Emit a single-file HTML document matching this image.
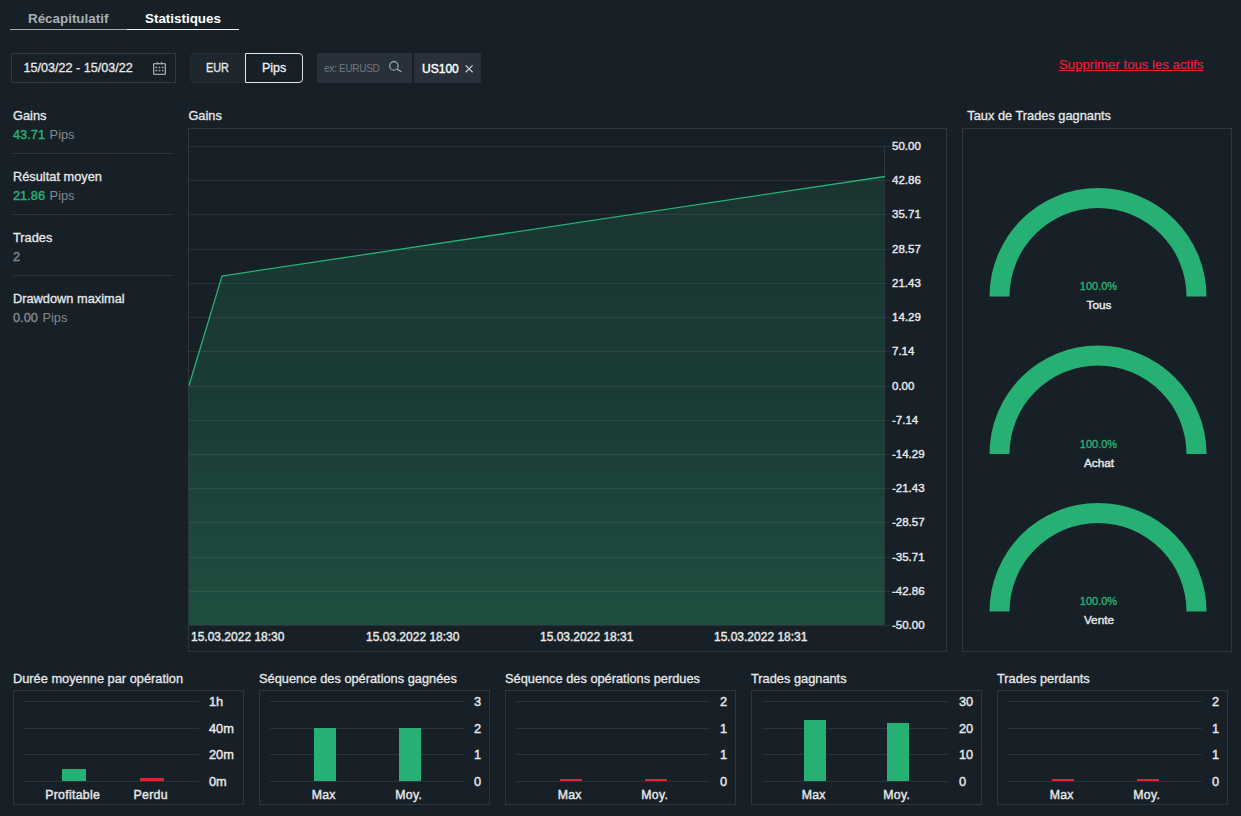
<!DOCTYPE html>
<html><head><meta charset="utf-8">
<style>
*{box-sizing:border-box;margin:0;padding:0}
html,body{width:1241px;height:816px;overflow:hidden;background:#182027;font-family:"Liberation Sans", sans-serif;color:#e6e8ea}
.abs{position:absolute}
.t{position:absolute;white-space:nowrap;line-height:1}
.m{-webkit-text-stroke:0.25px currentColor}
svg text{font-family:"Liberation Sans", sans-serif}
</style></head><body>
<div class="t" style="left:28px;top:11.76px;font-size:13.4px;font-weight:bold;color:#a9afb4;">Récapitulatif</div>
<div class="t" style="left:145px;top:11.76px;font-size:13.4px;font-weight:bold;color:#ffffff;">Statistiques</div>
<div class="abs" style="left:10px;top:29px;width:117px;height:1px;background:#a3abb0"></div>
<div class="abs" style="left:127px;top:29px;width:112px;height:1px;background:#f4f4f4"></div>
<div class="abs" style="left:11px;top:53px;width:165px;height:30px;border:1px solid #2f3a41"></div>
<div class="t" style="left:23.6px;top:62.43px;font-size:12.6px;font-weight:normal;color:#e8e9ea;-webkit-text-stroke:0.3px currentColor">15/03/22 - 15/03/22</div>
<svg class="abs" style="left:150px;top:59px" width="20" height="20" viewBox="150 59 20 20">
<rect x="153.65" y="63.65" width="11.7" height="10.7" rx="0.6" fill="none" stroke="#9aa9b4" stroke-width="1.3"/>
<line x1="157.5" y1="61.8" x2="157.5" y2="64.5" stroke="#9aa7b0" stroke-width="1.1"/>
<line x1="161.5" y1="61.8" x2="161.5" y2="64.5" stroke="#9aa7b0" stroke-width="1.1"/>
<g fill="#9aa7b0"><circle cx="156.3" cy="67.4" r="0.95"/><circle cx="159.5" cy="67.4" r="0.95"/><circle cx="162.7" cy="67.4" r="0.95"/><circle cx="156.3" cy="70.6" r="0.95"/><circle cx="159.5" cy="70.6" r="0.95"/><circle cx="162.7" cy="70.6" r="0.95"/></g>
</svg>
<div class="abs" style="left:190px;top:53px;width:113px;height:30px;background:#1f272e;border:1px solid #252e35;border-radius:4px"></div>
<div class="t" style="left:206.2px;top:62.09px;font-size:12.3px;font-weight:normal;color:#e8e9ea;-webkit-text-stroke:0.3px currentColor;transform:scaleX(0.885);transform-origin:0 0">EUR</div>
<div class="abs" style="left:245px;top:53px;width:58px;height:30px;border:1.5px solid #e4e4e4;border-radius:0 4px 4px 0;background:#182027"></div>
<div class="t" style="left:262px;top:62.12px;font-size:12.5px;font-weight:normal;color:#f0f0f0;-webkit-text-stroke:0.3px currentColor">Pips</div>
<div class="abs" style="left:317px;top:53px;width:95px;height:30px;background:#283139"></div>
<div class="t" style="left:324.1px;top:64.03px;font-size:10px;font-weight:normal;color:#6f7880;letter-spacing:-0.3px">ex: EURUSD</div>
<svg class="abs" style="left:385px;top:58px" width="20" height="18" viewBox="385 58 20 18">
<circle cx="393.9" cy="65.9" r="4.2" fill="none" stroke="#9aadb8" stroke-width="1.2"/>
<line x1="396.9" y1="69" x2="401.5" y2="71.8" stroke="#9aadb8" stroke-width="1.3"/>
</svg>
<div class="abs" style="left:414px;top:53px;width:67px;height:30px;background:#283139"></div>
<div class="t" style="left:422.1px;top:62.94px;font-size:12px;font-weight:normal;color:#ffffff;-webkit-text-stroke:0.4px #fff">US100</div>
<svg class="abs" style="left:463px;top:63px" width="12" height="12" viewBox="463 63 12 12">
<path d="M465.6 65.4L472.6 72.2M472.6 65.4L465.6 72.2" stroke="#c9ced1" stroke-width="1.2"/>
</svg>
<div class="t" style="left:1059px;top:57.83px;font-size:13.2px;font-weight:normal;color:#ea1f28;text-decoration:underline;text-underline-offset:1px;-webkit-text-stroke:0.2px #ea1f28">Supprimer tous les actifs</div>
<div class="t" style="left:13px;top:110.36px;font-size:12.8px;font-weight:normal;color:#e6e8ea;-webkit-text-stroke:0.3px currentColor">Gains</div>
<div class="t" style="left:13px;top:129.46px;font-size:12.8px"><span style="color:#27b074;-webkit-text-stroke:0.4px #27b074">43.71</span> <span style="color:#80888e;margin-left:1px">Pips</span></div>
<div class="abs" style="left:13px;top:153px;width:160px;height:1px;background:#2c373e"></div>
<div class="t" style="left:13px;top:171.36px;font-size:12.8px;font-weight:normal;color:#e6e8ea;-webkit-text-stroke:0.3px currentColor">Résultat moyen</div>
<div class="t" style="left:13px;top:190.46px;font-size:12.8px"><span style="color:#27b074;-webkit-text-stroke:0.4px #27b074">21.86</span> <span style="color:#80888e;margin-left:1px">Pips</span></div>
<div class="abs" style="left:13px;top:214px;width:160px;height:1px;background:#2c373e"></div>
<div class="t" style="left:13px;top:232.36px;font-size:12.8px;font-weight:normal;color:#e6e8ea;-webkit-text-stroke:0.3px currentColor">Trades</div>
<div class="t" style="left:13px;top:251.46px;font-size:12.8px;font-weight:normal;color:#80888e;"><span style="-webkit-text-stroke:0.4px #80888e">2</span></div>
<div class="abs" style="left:13px;top:275px;width:160px;height:1px;background:#2c373e"></div>
<div class="t" style="left:13px;top:293.36px;font-size:12.8px;font-weight:normal;color:#e6e8ea;-webkit-text-stroke:0.3px currentColor">Drawdown maximal</div>
<div class="t" style="left:13px;top:312.46px;font-size:12.8px"><span style="color:#80888e;-webkit-text-stroke:0.4px #80888e">0.00</span> <span style="color:#80888e;margin-left:1px">Pips</span></div>
<div class="t" style="left:188.4px;top:110.36px;font-size:12.8px;font-weight:normal;color:#e6e8ea;-webkit-text-stroke:0.3px currentColor">Gains</div>
<div class="t" style="left:967.3px;top:110.36px;font-size:12.8px;font-weight:normal;color:#e6e8ea;-webkit-text-stroke:0.3px currentColor">Taux de Trades gagnants</div>
<svg class="abs" style="left:0;top:0" width="1241" height="816" viewBox="0 0 1241 816">
<defs><linearGradient id="fg" x1="0" y1="176" x2="0" y2="625" gradientUnits="userSpaceOnUse"><stop offset="0" stop-color="#27b074" stop-opacity="0.14"/><stop offset="0.55" stop-color="#27b074" stop-opacity="0.2"/><stop offset="1" stop-color="#27b074" stop-opacity="0.33"/></linearGradient></defs>
<rect x="188.5" y="128.5" width="758" height="523" fill="none" stroke="#2c373e"/>
<path d="M189 385.5 L222 276 L885 176.5 L885 625 L189 625 Z" fill="url(#fg)"/>
<line x1="189" y1="146.5" x2="890" y2="146.5" stroke="#ffffff" stroke-opacity="0.075"/>
<text x="892" y="150.0" font-size="11.5" fill="#e6e8ea" stroke="#e6e8ea" stroke-width="0.4">50.00</text>
<line x1="189" y1="180.5" x2="890" y2="180.5" stroke="#ffffff" stroke-opacity="0.075"/>
<text x="892" y="184.0" font-size="11.5" fill="#e6e8ea" stroke="#e6e8ea" stroke-width="0.4">42.86</text>
<line x1="189" y1="214.5" x2="890" y2="214.5" stroke="#ffffff" stroke-opacity="0.075"/>
<text x="892" y="218.0" font-size="11.5" fill="#e6e8ea" stroke="#e6e8ea" stroke-width="0.4">35.71</text>
<line x1="189" y1="249.5" x2="890" y2="249.5" stroke="#ffffff" stroke-opacity="0.075"/>
<text x="892" y="253.0" font-size="11.5" fill="#e6e8ea" stroke="#e6e8ea" stroke-width="0.4">28.57</text>
<line x1="189" y1="283.5" x2="890" y2="283.5" stroke="#ffffff" stroke-opacity="0.075"/>
<text x="892" y="287.0" font-size="11.5" fill="#e6e8ea" stroke="#e6e8ea" stroke-width="0.4">21.43</text>
<line x1="189" y1="317.5" x2="890" y2="317.5" stroke="#ffffff" stroke-opacity="0.075"/>
<text x="892" y="321.0" font-size="11.5" fill="#e6e8ea" stroke="#e6e8ea" stroke-width="0.4">14.29</text>
<line x1="189" y1="351.5" x2="890" y2="351.5" stroke="#ffffff" stroke-opacity="0.075"/>
<text x="892" y="355.0" font-size="11.5" fill="#e6e8ea" stroke="#e6e8ea" stroke-width="0.4">7.14</text>
<line x1="189" y1="386.5" x2="890" y2="386.5" stroke="#ffffff" stroke-opacity="0.075"/>
<text x="892" y="390.0" font-size="11.5" fill="#e6e8ea" stroke="#e6e8ea" stroke-width="0.4">0.00</text>
<line x1="189" y1="420.5" x2="890" y2="420.5" stroke="#ffffff" stroke-opacity="0.075"/>
<text x="892" y="424.0" font-size="11.5" fill="#e6e8ea" stroke="#e6e8ea" stroke-width="0.4">-7.14</text>
<line x1="189" y1="454.5" x2="890" y2="454.5" stroke="#ffffff" stroke-opacity="0.075"/>
<text x="892" y="458.0" font-size="11.5" fill="#e6e8ea" stroke="#e6e8ea" stroke-width="0.4">-14.29</text>
<line x1="189" y1="488.5" x2="890" y2="488.5" stroke="#ffffff" stroke-opacity="0.075"/>
<text x="892" y="492.0" font-size="11.5" fill="#e6e8ea" stroke="#e6e8ea" stroke-width="0.4">-21.43</text>
<line x1="189" y1="522.5" x2="890" y2="522.5" stroke="#ffffff" stroke-opacity="0.075"/>
<text x="892" y="526.0" font-size="11.5" fill="#e6e8ea" stroke="#e6e8ea" stroke-width="0.4">-28.57</text>
<line x1="189" y1="557.5" x2="890" y2="557.5" stroke="#ffffff" stroke-opacity="0.075"/>
<text x="892" y="561.0" font-size="11.5" fill="#e6e8ea" stroke="#e6e8ea" stroke-width="0.4">-35.71</text>
<line x1="189" y1="591.5" x2="890" y2="591.5" stroke="#ffffff" stroke-opacity="0.075"/>
<text x="892" y="595.0" font-size="11.5" fill="#e6e8ea" stroke="#e6e8ea" stroke-width="0.4">-42.86</text>
<line x1="189" y1="625.5" x2="890" y2="625.5" stroke="#ffffff" stroke-opacity="0.075"/>
<text x="892" y="629.0" font-size="11.5" fill="#e6e8ea" stroke="#e6e8ea" stroke-width="0.4">-50.00</text>
<line x1="884.5" y1="146" x2="884.5" y2="625" stroke="#2c373e"/>
<polyline points="189,385.5 222,276 885,176.5" fill="none" stroke="#27b074" stroke-width="1.3"/>
<text x="191" y="641" font-size="12" fill="#e6e8ea" stroke="#e6e8ea" stroke-width="0.4">15.03.2022 18:30</text>
<text x="366" y="641" font-size="12" fill="#e6e8ea" stroke="#e6e8ea" stroke-width="0.4">15.03.2022 18:30</text>
<text x="540" y="641" font-size="12" fill="#e6e8ea" stroke="#e6e8ea" stroke-width="0.4">15.03.2022 18:31</text>
<text x="714" y="641" font-size="12" fill="#e6e8ea" stroke="#e6e8ea" stroke-width="0.4">15.03.2022 18:31</text>
<rect x="962.5" y="128.5" width="269" height="523" fill="none" stroke="#2c373e"/>
<path d="M989.5 296.5 A108.5 108.5 0 0 1 1206.5 296.5 L1186.5 296.5 A88.5 88.5 0 0 0 1009.5 296.5 Z" fill="#27b074"/>
<text x="1098.5" y="290.4" text-anchor="middle" font-size="11" fill="#27b074" stroke="#27b074" stroke-width="0.35">100.0%</text>
<text x="1099" y="309.2" text-anchor="middle" font-size="11.8" fill="#e6e8ea" stroke="#e6e8ea" stroke-width="0.4">Tous</text>
<path d="M989.5 454 A108.5 108.5 0 0 1 1206.5 454 L1186.5 454 A88.5 88.5 0 0 0 1009.5 454 Z" fill="#27b074"/>
<text x="1098.5" y="447.9" text-anchor="middle" font-size="11" fill="#27b074" stroke="#27b074" stroke-width="0.35">100.0%</text>
<text x="1099" y="466.7" text-anchor="middle" font-size="11.8" fill="#e6e8ea" stroke="#e6e8ea" stroke-width="0.4">Achat</text>
<path d="M989.5 611.5 A108.5 108.5 0 0 1 1206.5 611.5 L1186.5 611.5 A88.5 88.5 0 0 0 1009.5 611.5 Z" fill="#27b074"/>
<text x="1098.5" y="605.4" text-anchor="middle" font-size="11" fill="#27b074" stroke="#27b074" stroke-width="0.35">100.0%</text>
<text x="1099" y="624.2" text-anchor="middle" font-size="11.8" fill="#e6e8ea" stroke="#e6e8ea" stroke-width="0.4">Vente</text>
<rect x="13.5" y="690.5" width="230" height="114" fill="none" stroke="#2c373e"/>
<line x1="24" y1="701.5" x2="199" y2="701.5" stroke="#29343b"/>
<text x="209" y="705.8" font-size="12.8" fill="#e6e8ea" stroke="#e6e8ea" stroke-width="0.4">1h</text>
<line x1="24" y1="728.5" x2="199" y2="728.5" stroke="#29343b"/>
<text x="209" y="732.8" font-size="12.8" fill="#e6e8ea" stroke="#e6e8ea" stroke-width="0.4">40m</text>
<line x1="24" y1="754.5" x2="199" y2="754.5" stroke="#29343b"/>
<text x="209" y="758.8" font-size="12.8" fill="#e6e8ea" stroke="#e6e8ea" stroke-width="0.4">20m</text>
<line x1="24" y1="781.5" x2="199" y2="781.5" stroke="#29343b"/>
<text x="209" y="785.8" font-size="12.8" fill="#e6e8ea" stroke="#e6e8ea" stroke-width="0.4">0m</text>
<rect x="62" y="769" width="24" height="12" fill="#27b074"/>
<rect x="140" y="778" width="24" height="3" fill="#e0232e"/>
<text x="72.7" y="798.7" text-anchor="middle" font-size="12.3" letter-spacing="0.3" fill="#e6e8ea" stroke="#e6e8ea" stroke-width="0.4">Profitable</text>
<text x="150.7" y="798.7" text-anchor="middle" font-size="12.3" letter-spacing="0.3" fill="#e6e8ea" stroke="#e6e8ea" stroke-width="0.4">Perdu</text>
<rect x="259.5" y="690.5" width="230" height="114" fill="none" stroke="#2c373e"/>
<line x1="270" y1="701.5" x2="464" y2="701.5" stroke="#29343b"/>
<text x="474" y="705.8" font-size="12.8" fill="#e6e8ea" stroke="#e6e8ea" stroke-width="0.4">3</text>
<line x1="270" y1="728.5" x2="464" y2="728.5" stroke="#29343b"/>
<text x="474" y="732.8" font-size="12.8" fill="#e6e8ea" stroke="#e6e8ea" stroke-width="0.4">2</text>
<line x1="270" y1="754.5" x2="464" y2="754.5" stroke="#29343b"/>
<text x="474" y="758.8" font-size="12.8" fill="#e6e8ea" stroke="#e6e8ea" stroke-width="0.4">1</text>
<line x1="270" y1="781.5" x2="464" y2="781.5" stroke="#29343b"/>
<text x="474" y="785.8" font-size="12.8" fill="#e6e8ea" stroke="#e6e8ea" stroke-width="0.4">0</text>
<rect x="314" y="728" width="22" height="53" fill="#27b074"/>
<rect x="399" y="728" width="22" height="53" fill="#27b074"/>
<text x="323.7" y="798.7" text-anchor="middle" font-size="12.3" letter-spacing="0.3" fill="#e6e8ea" stroke="#e6e8ea" stroke-width="0.4">Max</text>
<text x="408.7" y="798.7" text-anchor="middle" font-size="12.3" letter-spacing="0.3" fill="#e6e8ea" stroke="#e6e8ea" stroke-width="0.4">Moy.</text>
<rect x="505.5" y="690.5" width="230" height="114" fill="none" stroke="#2c373e"/>
<line x1="516" y1="701.5" x2="710" y2="701.5" stroke="#29343b"/>
<text x="720" y="705.8" font-size="12.8" fill="#e6e8ea" stroke="#e6e8ea" stroke-width="0.4">2</text>
<line x1="516" y1="728.5" x2="710" y2="728.5" stroke="#29343b"/>
<text x="720" y="732.8" font-size="12.8" fill="#e6e8ea" stroke="#e6e8ea" stroke-width="0.4">1</text>
<line x1="516" y1="754.5" x2="710" y2="754.5" stroke="#29343b"/>
<text x="720" y="758.8" font-size="12.8" fill="#e6e8ea" stroke="#e6e8ea" stroke-width="0.4">1</text>
<line x1="516" y1="781.5" x2="710" y2="781.5" stroke="#29343b"/>
<text x="720" y="785.8" font-size="12.8" fill="#e6e8ea" stroke="#e6e8ea" stroke-width="0.4">0</text>
<rect x="560" y="779" width="22" height="2" fill="#e0232e"/>
<rect x="645" y="779" width="22" height="2" fill="#e0232e"/>
<text x="569.7" y="798.7" text-anchor="middle" font-size="12.3" letter-spacing="0.3" fill="#e6e8ea" stroke="#e6e8ea" stroke-width="0.4">Max</text>
<text x="654.7" y="798.7" text-anchor="middle" font-size="12.3" letter-spacing="0.3" fill="#e6e8ea" stroke="#e6e8ea" stroke-width="0.4">Moy.</text>
<rect x="751.5" y="690.5" width="230" height="114" fill="none" stroke="#2c373e"/>
<line x1="762" y1="701.5" x2="949" y2="701.5" stroke="#29343b"/>
<text x="959" y="705.8" font-size="12.8" fill="#e6e8ea" stroke="#e6e8ea" stroke-width="0.4">30</text>
<line x1="762" y1="728.5" x2="949" y2="728.5" stroke="#29343b"/>
<text x="959" y="732.8" font-size="12.8" fill="#e6e8ea" stroke="#e6e8ea" stroke-width="0.4">20</text>
<line x1="762" y1="754.5" x2="949" y2="754.5" stroke="#29343b"/>
<text x="959" y="758.8" font-size="12.8" fill="#e6e8ea" stroke="#e6e8ea" stroke-width="0.4">10</text>
<line x1="762" y1="781.5" x2="949" y2="781.5" stroke="#29343b"/>
<text x="959" y="785.8" font-size="12.8" fill="#e6e8ea" stroke="#e6e8ea" stroke-width="0.4">0</text>
<rect x="804" y="720" width="22" height="61" fill="#27b074"/>
<rect x="887" y="723" width="22" height="58" fill="#27b074"/>
<text x="813.7" y="798.7" text-anchor="middle" font-size="12.3" letter-spacing="0.3" fill="#e6e8ea" stroke="#e6e8ea" stroke-width="0.4">Max</text>
<text x="896.7" y="798.7" text-anchor="middle" font-size="12.3" letter-spacing="0.3" fill="#e6e8ea" stroke="#e6e8ea" stroke-width="0.4">Moy.</text>
<rect x="997.5" y="690.5" width="230" height="114" fill="none" stroke="#2c373e"/>
<line x1="1008" y1="701.5" x2="1202" y2="701.5" stroke="#29343b"/>
<text x="1212" y="705.8" font-size="12.8" fill="#e6e8ea" stroke="#e6e8ea" stroke-width="0.4">2</text>
<line x1="1008" y1="728.5" x2="1202" y2="728.5" stroke="#29343b"/>
<text x="1212" y="732.8" font-size="12.8" fill="#e6e8ea" stroke="#e6e8ea" stroke-width="0.4">1</text>
<line x1="1008" y1="754.5" x2="1202" y2="754.5" stroke="#29343b"/>
<text x="1212" y="758.8" font-size="12.8" fill="#e6e8ea" stroke="#e6e8ea" stroke-width="0.4">1</text>
<line x1="1008" y1="781.5" x2="1202" y2="781.5" stroke="#29343b"/>
<text x="1212" y="785.8" font-size="12.8" fill="#e6e8ea" stroke="#e6e8ea" stroke-width="0.4">0</text>
<rect x="1052" y="779" width="22" height="2" fill="#e0232e"/>
<rect x="1137" y="779" width="22" height="2" fill="#e0232e"/>
<text x="1061.7" y="798.7" text-anchor="middle" font-size="12.3" letter-spacing="0.3" fill="#e6e8ea" stroke="#e6e8ea" stroke-width="0.4">Max</text>
<text x="1146.7" y="798.7" text-anchor="middle" font-size="12.3" letter-spacing="0.3" fill="#e6e8ea" stroke="#e6e8ea" stroke-width="0.4">Moy.</text>
</svg>
<div class="t" style="left:13px;top:673.26px;font-size:12.8px;font-weight:normal;color:#e6e8ea;-webkit-text-stroke:0.3px currentColor">Durée moyenne par opération</div>
<div class="t" style="left:259px;top:673.26px;font-size:12.8px;font-weight:normal;color:#e6e8ea;-webkit-text-stroke:0.3px currentColor">Séquence des opérations gagnées</div>
<div class="t" style="left:505px;top:673.26px;font-size:12.8px;font-weight:normal;color:#e6e8ea;-webkit-text-stroke:0.3px currentColor">Séquence des opérations perdues</div>
<div class="t" style="left:751px;top:673.26px;font-size:12.8px;font-weight:normal;color:#e6e8ea;-webkit-text-stroke:0.3px currentColor">Trades gagnants</div>
<div class="t" style="left:997px;top:673.26px;font-size:12.8px;font-weight:normal;color:#e6e8ea;-webkit-text-stroke:0.3px currentColor">Trades perdants</div>
</body></html>
